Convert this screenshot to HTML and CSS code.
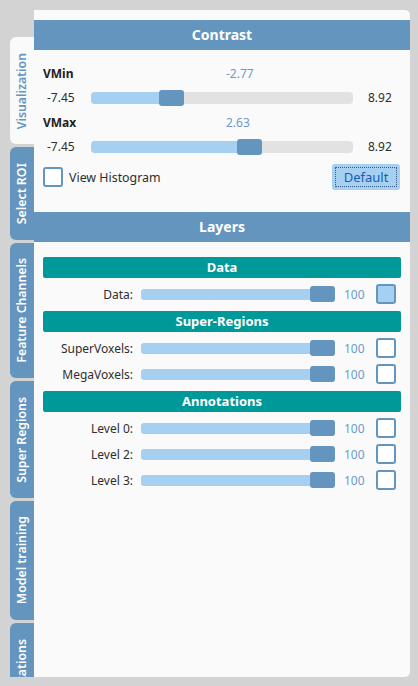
FILE: index.html
```html
<!DOCTYPE html>
<html>
<head>
<meta charset="utf-8">
<link rel="stylesheet" href="styles.css">
</head>
<body>
<div class="app">
  <nav class="tabs">
    <div class="tab active"><span>Visualization</span></div>
    <div class="tab"><span>Select ROI</span></div>
    <div class="tab"><span>Feature Channels</span></div>
    <div class="tab"><span>Super Regions</span></div>
    <div class="tab"><span>Model training</span></div>
    <div class="tab"><span>Annotations</span></div>
  </nav>
  <main class="panel">
    <div class="head">Contrast</div>
    <div class="contrast">
      <div class="lbl-row"><b>VMin</b><span class="val">-2.77</span></div>
      <div class="range-row">
        <span class="min">-7.45</span>
        <div class="track"><div class="fill" style="width:68px"></div><div class="thumb"></div></div>
        <span class="max">8.92</span>
      </div>
      <div class="lbl-row"><b>VMax</b><span class="val">2.63</span></div>
      <div class="range-row">
        <span class="min">-7.45</span>
        <div class="track"><div class="fill" style="width:146px"></div><div class="thumb"></div></div>
        <span class="max">8.92</span>
      </div>
      <div class="opt-row">
        <label class="check-label"><span class="box"></span>View Histogram</label>
        <button class="btn"><span>Default</span></button>
      </div>
    </div>
    <div class="head">Layers</div>
    <div class="layers">
      <div class="bar">Data</div>
      <div class="group">
        <div class="lrow"><span class="name">Data:</span><div class="ltrack"><div class="lfill"></div><div class="thumb"></div></div><span class="num">100</span><span class="box filled"></span></div>
      </div>
      <div class="bar">Super-Regions</div>
      <div class="group">
        <div class="lrow"><span class="name">SuperVoxels:</span><div class="ltrack"><div class="lfill"></div><div class="thumb"></div></div><span class="num">100</span><span class="box"></span></div>
        <div class="lrow"><span class="name">MegaVoxels:</span><div class="ltrack"><div class="lfill"></div><div class="thumb"></div></div><span class="num">100</span><span class="box"></span></div>
      </div>
      <div class="bar">Annotations</div>
      <div class="group">
        <div class="lrow"><span class="name">Level 0:</span><div class="ltrack"><div class="lfill"></div><div class="thumb"></div></div><span class="num">100</span><span class="box"></span></div>
        <div class="lrow"><span class="name">Level 2:</span><div class="ltrack"><div class="lfill"></div><div class="thumb"></div></div><span class="num">100</span><span class="box"></span></div>
        <div class="lrow"><span class="name">Level 3:</span><div class="ltrack"><div class="lfill"></div><div class="thumb"></div></div><span class="num">100</span><span class="box"></span></div>
      </div>
    </div>
  </main>
</div>
</body>
</html>
```
FILE: styles.css
```css
body {
  margin: 0;
  background: #d3d3d3;
  font-family: "Noto Sans", sans-serif;
  font-size: 12px;
  color: #2e2e2e;
}
.app {
  display: flex;
  height: 686px;
  box-sizing: border-box;
  padding: 10px 8px 9px 10px;
}
.tabs {
  width: 24px;
  flex: none;
  display: flex;
  flex-direction: column;
  gap: 3px;
  padding-top: 27px;
  overflow: hidden;
}
.tab {
  flex: none;
  background: #6495be;
  color: #fff;
  border-radius: 6px 0 0 6px;
  display: flex;
  justify-content: center;
  padding: 15.5px 0;
  font-weight: 600;
  font-size: 12.3px;
}
.tab span {
  writing-mode: vertical-rl;
  transform: rotate(180deg);
  line-height: 24px;
  white-space: nowrap;
}
.tab.active {
  background: #fafafa;
  color: #6495be;
}
.panel {
  flex: 1;
  background: #fafafa;
  border-radius: 0 5px 5px 0;
  padding-top: 10px;
  display: flex;
  flex-direction: column;
}
.head {
  height: 30px;
  line-height: 30px;
  background: #6495be;
  color: #fff;
  font-weight: 700;
  font-size: 14px;
  text-align: center;
}
.contrast {
  padding: 11px 9px 22px;
}
.lbl-row {
  height: 24px;
  display: grid;
  grid-template-columns: 183px 1fr;
  align-items: center;
}
.lbl-row b {
  font-weight: 700;
  color: #222;
}
.val, .num {
  color: #6b9bc9;
}
.range-row {
  height: 25px;
  display: grid;
  grid-template-columns: 48px 262px 1fr;
  align-items: center;
}
.min {
  padding-left: 4px;
}
.max {
  padding-left: 15px;
}
.track {
  height: 12px;
  background: #e2e2e2;
  border-radius: 4px;
  display: flex;
  align-items: center;
}
.fill {
  height: 100%;
  background: #a6d0f1;
  border-radius: 4px 0 0 4px;
}
.thumb {
  flex: none;
  width: 25px;
  height: 16px;
  background: #6495be;
  border-radius: 3px;
}
.opt-row {
  margin-top: 5px;
  height: 26px;
  display: flex;
  align-items: center;
  justify-content: space-between;
}
.check-label {
  display: flex;
  align-items: center;
  gap: 6px;
  font-size: 12.4px;
}
.box {
  display: block;
  width: 20px;
  height: 20px;
  box-sizing: border-box;
  border: 2px solid #6495be;
  border-radius: 3px;
  background: #fff;
}
.box.filled {
  background: #a6d0f1;
}
.btn {
  width: 68px;
  height: 26px;
  margin-right: 1px;
  padding: 3px;
  border: none;
  border-radius: 3px;
  background: #a6d0f1;
  font-family: "Noto Sans", sans-serif;
  font-size: 13px;
  color: #1c5bb0;
  display: flex;
}
.btn span {
  flex: 1;
  border: 1px dotted #3a5a80;
  line-height: 18px;
}
.layers {
  padding: 15px 9px 0;
}
.bar {
  height: 21px;
  line-height: 21px;
  background: #009999;
  color: #fff;
  font-weight: 700;
  font-size: 13px;
  text-align: center;
  border-radius: 2px;
}
.group {
  padding: 3px 0 4px;
}
.lrow {
  display: grid;
  grid-template-columns: 90px 194px 25px 20px;
  column-gap: 8px;
  height: 26px;
  align-items: center;
}
.name {
  text-align: right;
}
.num {
  padding-left: 1px;
}
.ltrack {
  height: 11px;
  background: #a6d0f1;
  border-radius: 3px;
  display: flex;
  align-items: center;
}
.lfill {
  flex: 1;
}
```
